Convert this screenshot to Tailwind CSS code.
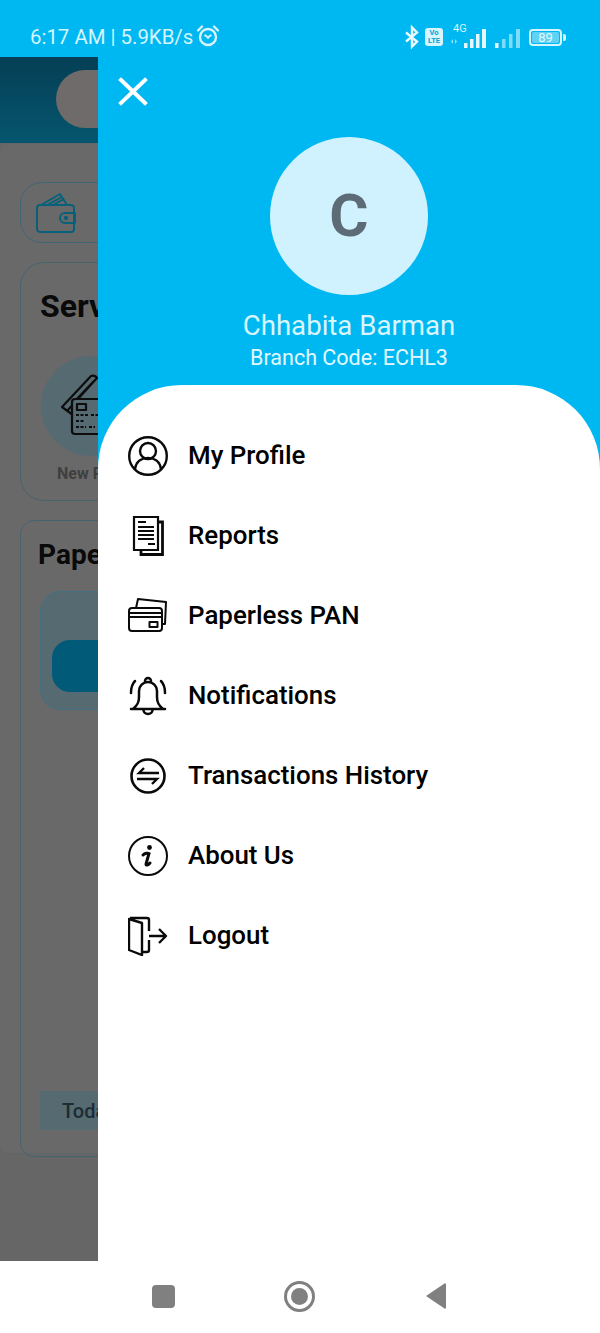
<!DOCTYPE html>
<html>
  <head>
    <meta charset="utf-8">
    <meta name="viewport" content="width=device-width">
    <title>Menu</title>
    <script src="https://cdn.jsdelivr.net/npm/@tailwindcss/browser@4"></script>
  </head>
  <body>
    <div class="relative flex flex-col w-[600px] h-[1333px] overflow-hidden bg-white font-['Roboto',sans-serif]">

      <!-- status bar -->
      <div class="absolute top-0 left-0 right-0 z-10 h-[74px] flex items-center justify-between pl-[30px] pr-[34px] text-[#d6f5ff]">
        <div class="flex items-center gap-[3px]">
          <span class="text-[20.400px] leading-none">6:17 AM | 5.9KB/s</span>
          <svg class="w-[24px] h-[24px] mb-[3px]" viewBox="0 0 24 24" fill="none" stroke="currentColor" stroke-width="2.400" stroke-linecap="round">
            <circle cx="12" cy="13" r="8"/>
            <path d="M2 6.500 6 2.500M22 6.500l-4-4"/>
            <path d="M9 11.500c1.200 0 3 1.800 3 3.200 0-1.400 1.800-3.200 3-3.200" stroke-width="1.800"/>
          </svg>
        </div>
        <div class="flex items-center">
          <svg class="w-[16px] h-[24px] mr-[5px]" viewBox="0 0 16 24" fill="none" stroke="#ecfbff" stroke-width="2.400">
            <path d="M2 7.500 13 16.500 8 21.500V2.500l5 5L2 16.500"/>
          </svg>
          <div class="w-[18px] h-[18px] mr-[8px] rounded-[3px] bg-[#d6f5ff] flex flex-col items-center justify-center text-[#00a5dc] text-[7.500px] leading-[8px] font-bold">
            <span>Vo</span><span>LTE</span>
          </div>
          <div class="relative w-[37px] h-[24px] mr-[6px]">
            <span class="absolute left-[2px] top-[-2px] text-[11px] leading-none text-[#d6f5ff]">4G</span>
            <svg class="absolute left-0 top-0 w-[37px] h-[24px]" viewBox="0 0 37 24" fill="#e4f9ff">
              <path d="M2 14v5L0 16.500zM4 14l2 2.500L4 19z" fill="#8fe2fa"/>
              <rect x="13" y="18" width="3.500" height="5"/>
              <rect x="19" y="14" width="3.500" height="9"/>
              <rect x="25" y="9" width="3.500" height="14"/>
              <rect x="31" y="4" width="4" height="19"/>
            </svg>
          </div>
          <svg class="w-[28px] h-[24px] mr-[7px]" viewBox="0 0 28 24" fill="#7fdcf8">
            <rect x="1" y="18" width="3.500" height="5" fill="#e4f9ff"/>
            <rect x="8" y="14" width="3.500" height="9"/>
            <rect x="15" y="9" width="3.500" height="14"/>
            <rect x="22" y="4" width="4" height="19"/>
          </svg>
          <div class="flex items-center">
            <div class="w-[33px] h-[17px] rounded-[4px] border-2 border-[#d6f5ff] p-[1px]">
              <div class="w-full h-full rounded-[2px] bg-[#5fd3f5] flex items-center justify-center text-[13px] leading-none text-[#e4f9ff]">89</div>
            </div>
            <div class="w-[3px] h-[7px] ml-[1px] rounded-r-[2px] bg-[#d6f5ff]"></div>
          </div>
        </div>
      </div>

      <div class="flex h-[1261px] bg-[#00b8f1]">
        <!-- dimmed page behind the drawer -->
        <div class="w-[98px] shrink-0 overflow-hidden pt-[57px]">
          <div class="w-[560px] h-[1204px] bg-[#666666]">
            <div class="h-[86px] bg-linear-to-b from-[#053f55] to-[#05566f] pl-[56px] pt-[13px]">
              <div class="w-[200px] h-[58px] rounded-[29px] bg-[#6f6b6b]"></div>
            </div>
            <div class="mt-[1px] h-[1010px] rounded-[10px] border-b border-[#5e6668] pl-[20px] pt-[38px] bg-[#696969]">
              <!-- wallet -->
              <div class="flex items-center w-[500px] h-[61px] rounded-[22px] border border-[#3f6775] pl-[15px]">
                <svg class="w-[40px] h-[42px]" viewBox="0 0 40 42" fill="none" stroke="#07607a" stroke-width="1.900" stroke-linejoin="round">
                  <rect x="1" y="13" width="37" height="27" rx="3"/>
                  <path d="M5 13 24 2l7 11M11 13 26 5M17 13 28 7"/>
                  <path d="M39 21H29a4.500 4.500 0 0 0 0 10h10z"/>
                  <circle cx="30" cy="26" r="1.200" fill="#07607a"/>
                </svg>
              </div>
              <!-- services -->
              <div class="mt-[19px] w-[500px] h-[239px] rounded-[24px] border border-[#47636e] pl-[20px] pt-[24px]">
                <div class="-ml-[1px] text-[32px] leading-[38px] font-bold text-[#0a0a0a]">Services</div>
                <div class="mt-[31px] w-[100px] h-[100px] rounded-full bg-[#566a72] flex items-center justify-center">
                  <svg class="w-[64px] h-[64px] ml-[4px]" viewBox="0 0 64 64" fill="none" stroke="#0d0d0d" stroke-width="2.200" stroke-linejoin="round">
                    <path d="M12 41 1 33 30 2c2-1 5 0 6 2L6 37M11 30 33 7"/>
                    <rect x="11" y="25" width="45" height="35" rx="3" fill="#566a72"/>
                    <rect x="16" y="30" width="9" height="6"/>
                    <path d="M15 41h12M15 47h8M15 53h10M30 41h12M28 53h6" stroke-dasharray="3 1.500"/>
                  </svg>
                </div>
                <div class="mt-[8px] ml-[16px] text-[16px] leading-[20px] font-bold text-[#3f3f3f]">New PAN</div>
              </div>
              <!-- paperless -->
              <div class="mt-[19px] w-[500px] h-[637px] rounded-[14px] border border-[#47636e] pl-[19px] pt-[17px]">
                <div class="-ml-[2px] text-[28px] leading-[34px] font-bold text-[#0a0a0a]">Paperless</div>
                <div class="mt-[19px] w-[460px] h-[119px] rounded-[20px] border border-[#44707f] bg-[#566a72] pl-[11px] pt-[48px]">
                  <div class="w-[300px] h-[52px] rounded-[18px] bg-[#005a78]"></div>
                </div>
                <div class="mt-[381px] w-[300px] h-[39px] bg-[#566a72] pl-[22px] text-[20px] leading-[40px] font-medium text-[#1c2c33]">Today's</div>
              </div>
            </div>
          </div>
        </div>

        <!-- drawer -->
        <div class="flex-1 flex flex-col items-center">
          <div class="h-[137px] w-full pl-[17px] pt-[73px]">
            <svg class="w-[36px] h-[36px]" viewBox="0 0 36 36" fill="none" stroke="#ffffff" stroke-width="4" stroke-linecap="square">
              <path d="M6 7l24 23M30 7 6 30"/>
            </svg>
          </div>
          <div class="w-[158px] h-[158px] shrink-0 rounded-full bg-[#cff2fe] flex items-center justify-center text-[60px] font-bold leading-none text-[#5c6b75]">C</div>
          <div class="mt-[14px] text-[27.600px] leading-[34px] text-[#d9f6ff]">Chhabita Barman</div>
          <div class="mt-[1px] text-[21.500px] leading-[28px] text-[#e4f9ff]">Branch Code: ECHL3</div>
          <div class="mt-[13px] w-full flex-1 rounded-t-[84px] bg-white pt-[31px] pl-[30px]">

            <div class="flex items-center h-[80px] gap-[20px]">
              <svg class="w-[40px] h-[40px]" viewBox="0 0 40 40" fill="none" stroke="#0a0a0a" stroke-width="2.400">
                <circle cx="20" cy="20" r="18.800"/>
                <circle cx="20" cy="15" r="8"/>
                <path d="M7 33c1-8 7-11 13-11s12 3 13 11"/>
              </svg>
              <span class="text-[25.900px] leading-none font-medium text-black">My Profile</span>
            </div>

            <div class="flex items-center h-[80px] gap-[20px]">
              <svg class="w-[40px] h-[40px]" viewBox="0 0 40 40" fill="none" stroke="#0a0a0a">
                <path d="M6 1h24v33H6z" stroke-width="2.200"/>
                <path d="M30 6h4.500v32.500H13V34" stroke-width="2.800"/>
                <path d="M10 6h8M10 11h16M10 15h16M10 19h16M10 23h16M20 28h7" stroke-width="1.900"/>
              </svg>
              <span class="text-[25.900px] leading-none font-medium text-black">Reports</span>
            </div>

            <div class="flex items-center h-[80px] gap-[20px]">
              <svg class="w-[40px] h-[40px]" viewBox="0 0 40 40" fill="none" stroke="#0a0a0a" stroke-width="2" stroke-linejoin="round">
                <path d="M8 12 10 3l28 3-1 22h-3"/>
                <rect x="1" y="12" width="33" height="23" rx="3"/>
                <path d="M1 17h33M1 21h33"/>
                <rect x="21.500" y="26" width="8" height="5"/>
              </svg>
              <span class="text-[25.900px] leading-none font-medium text-black">Paperless PAN</span>
            </div>

            <div class="flex items-center h-[80px] gap-[20px]">
              <svg class="w-[40px] h-[40px]" viewBox="0 0 40 40" fill="none" stroke="#0a0a0a" stroke-width="2.500" stroke-linecap="round" stroke-linejoin="round">
                <path d="M3 33h34M5 33c5-4 6-7 6-12v-6c0-5 4-9 9-9s9 4 9 9v6c0 5 1 8 6 12"/>
                <path d="M17 5a3 3 0 1 1 6 0M15.500 34a4.500 4 0 0 0 9 0"/>
                <path d="M3 17c0-5 1-9 4-12M37 17c0-5-1-9-4-12"/>
              </svg>
              <span class="text-[25.900px] leading-none font-medium text-black">Notifications</span>
            </div>

            <div class="flex items-center h-[80px] gap-[20px]">
              <svg class="w-[40px] h-[40px]" viewBox="0 0 40 40" fill="none" stroke="#0a0a0a" stroke-width="2.600">
                <circle cx="20" cy="20" r="16.500"/>
                <path d="M31 17H11l5-5M9 23h20l-5 5" stroke-width="2.400"/>
              </svg>
              <span class="text-[25.900px] leading-none font-medium text-black">Transactions History</span>
            </div>

            <div class="flex items-center h-[80px] gap-[20px]">
              <svg class="w-[40px] h-[40px]" viewBox="0 0 40 40" fill="none" stroke="#0a0a0a" stroke-width="2">
                <circle cx="20" cy="20" r="19"/>
                <circle cx="21.500" cy="11.500" r="2.400" fill="#0a0a0a" stroke="none"/>
                <path d="M15 19c2-2 5-2 6-1.500L18 28c-.3 1.500 2 1.500 4-1" stroke-width="3" stroke-linecap="round"/>
              </svg>
              <span class="text-[25.900px] leading-none font-medium text-black">About Us</span>
            </div>

            <div class="flex items-center h-[80px] gap-[20px]">
              <svg class="w-[40px] h-[40px]" viewBox="0 0 40 40" fill="none" stroke="#0a0a0a" stroke-width="2.400" stroke-linejoin="round">
                <path d="M1 3v31l13 5V7zM2 2h17a2 2 0 0 1 2 2v11M21 24v10a2 2 0 0 1-2 2h-5"/>
                <path d="M21 20h17M31 13l7 7-7 7"/>
              </svg>
              <span class="text-[25.900px] leading-none font-medium text-black">Logout</span>
            </div>

          </div>
        </div>
      </div>

      <!-- nav bar -->
      <div class="h-[72px] flex items-center pl-[152px] pb-[2px]">
        <div class="w-[23px] h-[23px] rounded-[4px] bg-[#808080]"></div>
        <div class="ml-[109px] w-[31px] h-[31px] rounded-full border-[3px] border-[#808080] flex items-center justify-center">
          <div class="w-[17px] h-[17px] rounded-full bg-[#808080]"></div>
        </div>
        <svg class="ml-[110px] w-[22px] h-[26px]" viewBox="0 0 22 26" fill="#808080">
          <path d="M21 1v24a1 1 0 0 1-1.500 .5L1 13 19.500 .5A1 1 0 0 1 21 1z"/>
        </svg>
      </div>
    </div>
  </body>
</html>
